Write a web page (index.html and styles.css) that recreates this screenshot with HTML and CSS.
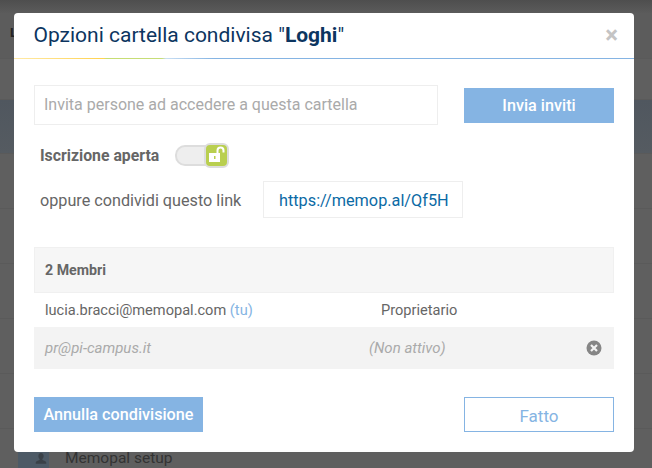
FILE: index.html
```html
<!DOCTYPE html>
<html lang="en">
<head>
    <meta charset="UTF-8">
    <title>Opzioni cartella condivisa</title>
    <link rel="stylesheet" href="styles.css">
</head>
<body>

    <!-- Page behind the overlay -->
    <div class="page">
        <div class="topbar"></div>
        <div class="row row-head"><span class="logo-letter">L</span></div>
        <div class="row row-short"></div>
        <div class="row row-active"></div>
        <div class="row"></div>
        <div class="row"></div>
        <div class="row"></div>
        <div class="row"></div>
        <div class="row"></div>
        <div class="row row-last">
            <div class="file-icon">
                <svg width="14" height="14" viewBox="0 0 16 16"><path fill="#3a4148" d="M8 1c2 0 3 1.500 3 3.500 0 1.500-.6 2.700-1.400 3.300v1.200c2 .6 4.400 1.400 4.400 3v1.500H2V12c0-1.600 2.400-2.400 4.400-3V7.800C5.600 7.200 5 6 5 4.500 5 2.500 6 1 8 1z"/></svg>
            </div>
            <span class="file-name">Memopal setup</span>
        </div>
    </div>

    <!-- Modal -->
    <div class="modal">
        <div class="modal-header">
            <h1>Opzioni cartella condivisa "<b>Loghi</b>"</h1>
            <span class="close">&times;</span>
        </div>

        <div class="modal-body">
            <div class="invite-row">
                <div class="invite-input">Invita persone ad accedere a questa cartella</div>
                <button class="btn btn-invite">Invia inviti</button>
            </div>

            <div class="open-row">
                <span class="open-label">Iscrizione aperta</span>
                <div class="toggle">
                    <div class="toggle-knob">
                        <svg width="20" height="19" viewBox="0 0 20 19">
                            <path fill="none" stroke="#fff" stroke-width="2" d="M11.500 8V5.500a3 3 0 0 1 6 0V7.500"/>
                            <rect x="3" y="8" width="11" height="9" fill="#fff"/>
                            <rect x="8" y="11" width="1.500" height="3" fill="#b9cf4f"/>
                        </svg>
                    </div>
                </div>
            </div>

            <div class="link-row">
                <span class="link-label">oppure condividi questo link</span>
                <div class="link-box">https://memop.al/Qf5H</div>
            </div>

            <div class="members">
                <div class="members-head">2 Membri</div>
                <div class="member">
                    <span class="member-mail">lucia.bracci@memopal.com <span class="you">(tu)</span></span>
                    <span class="member-role">Proprietario</span>
                </div>
                <div class="member member-off">
                    <span class="member-mail">pr@pi-campus.it</span>
                    <span class="member-role">(Non attivo)</span>
                    <svg class="remove" width="16" height="16" viewBox="0 0 16 16">
                        <circle cx="8" cy="8" r="7.500" fill="#868686"/>
                        <path stroke="#f3f3f3" stroke-width="2.200" d="M5 5l6 6M11 5l-6 6"/>
                    </svg>
                </div>
            </div>

            <div class="modal-footer">
                <button class="btn btn-cancel">Annulla condivisione</button>
                <button class="btn btn-done">Fatto</button>
            </div>
        </div>
    </div>

</body>
</html>
```

FILE: styles.css
```css
html, body {
    height: 100%;
}
body {
    font-family: Roboto, "Liberation Sans", sans-serif;
    margin: 0;
    background-color: #5f5f5f;
    color: #666;
    overflow: hidden;
}
.page {
    height: 468px;
    overflow: hidden;
}
.topbar {
    height: 13px;
    background: linear-gradient(#4e4e4e, #5b5b5b);
}
.row {
    height: 54px;
    border-bottom: 1px solid #5a5a5a;
}
.row-head {
    height: 45px;
    background-color: #5c5c5c;
    display: flex;
    align-items: center;
    padding-left: 10px;
}
.logo-letter {
    color: #222;
    font-size: 13px;
    font-weight: 700;
    margin-top: -7px;
}
.row-short {
    height: 40px;
}
.row-active {
    height: 53px;
    background: linear-gradient(#50575f, #555b61);
}
.row-last {
    display: flex;
    align-items: flex-start;
    padding-left: 18px;
    border-bottom: none;
}
.file-icon {
    width: 31px;
    height: 39px;
    background-color: #4d5a66;
    display: flex;
    align-items: flex-end;
    justify-content: flex-end;
    padding: 0 1px 2px 0;
    box-sizing: border-box;
}
.file-name {
    color: #333;
    font-size: 15.500px;
    margin: 20px 0 0 16px;
}
.modal {
    position: absolute;
    left: 14px;
    top: 13px;
    width: 620px;
    height: 439px;
    background: white;
    border-radius: 4px;
}
.modal-header {
    height: 46px;
    display: flex;
    align-items: center;
    justify-content: space-between;
    padding: 0 16px 3px 19.500px;
    box-sizing: border-box;
    position: relative;
}
.modal-header::after {
    content: "";
    position: absolute;
    left: 0;
    right: 0;
    bottom: 0;
    height: 1px;
    background: linear-gradient(90deg, #ffeaa8 0, #ffd24f 90px, #c8dd72 92px, #c6dd78 148px, #c8def3 152px, #85b4e3 200px);
}
h1 {
    margin: 0;
    font-size: 21px;
    font-weight: 400;
    color: #0c3560;
}
h1 b {
    font-weight: 700;
}
.close {
    color: #c4c4c4;
    font-size: 24px;
    font-weight: 700;
    line-height: 1;
}
.modal-body {
    padding: 26px 20px 0;
}
.invite-row {
    display: flex;
    justify-content: space-between;
    align-items: center;
}
.invite-input {
    width: 404px;
    height: 40px;
    box-sizing: border-box;
    border: 1px solid #eee;
    padding: 0 8px 0 9px;
    line-height: 38px;
    font-size: 16px;
    color: #aaa;
}
.btn {
    font-family: inherit;
    font-size: 16.200px;
    font-weight: 500;
    height: 35px;
    width: 150px;
    padding: 0;
    border: none;
    background-color: #85b4e3;
    color: white;
}
.open-row {
    display: flex;
    align-items: center;
    margin: 18px 0 0 6px;
    height: 25px;
}
.open-label {
    font-size: 15.800px;
    font-weight: 700;
    width: 135px;
}
.toggle {
    width: 54px;
    height: 21px;
    box-sizing: border-box;
    background-color: #eee;
    border: 2px solid #ddd;
    border-radius: 10px;
    position: relative;
}
.toggle-knob {
    position: absolute;
    right: -2px;
    top: -4px;
    width: 25px;
    height: 25px;
    box-sizing: border-box;
    background-color: #b9cf4f;
    border: 2px solid #ddd;
    border-radius: 6px;
}
.toggle-knob svg {
    display: block;
}
.link-row {
    display: flex;
    align-items: center;
    margin: 13px 0 0 6px;
}
.link-label {
    font-size: 16.200px;
    width: 223px;
    padding-top: 1px;
}
.link-box {
    width: 200px;
    height: 37px;
    box-sizing: border-box;
    border: 1px solid #eee;
    padding-left: 15px;
    line-height: 37px;
    font-size: 16.270px;
    color: #0b6aa5;
}
.members {
    margin-top: 29px;
    font-size: 14.600px;
}
.members-head {
    height: 46px;
    box-sizing: border-box;
    padding-left: 10px;
    line-height: 44px;
    font-size: 14.200px;
    font-weight: 700;
    background-color: #f6f6f6;
    border: 1px solid #f0f0f0;
}
.member {
    display: flex;
    align-items: center;
    height: 34px;
    padding: 0 12px 0 11px;
    position: relative;
}
.member-mail {
    width: 336px;
}
.you {
    color: #85b4e3;
}
.member-off {
    height: 42px;
    background-color: #f3f3f3;
    color: #aaa;
    font-style: italic;
    font-size: 15px;
}
.member-off .member-mail {
    width: 324px;
}
.remove {
    margin-left: auto;
}
.modal-footer {
    display: flex;
    justify-content: space-between;
    margin-top: 28px;
}
.btn-cancel {
    width: 169px;
}
.btn-done {
    background-color: white;
    color: #85b4e3;
    border: 1px solid #85b4e3;
    font-size: 17px;
    font-weight: 400;
    padding-top: 3px;
}
```
